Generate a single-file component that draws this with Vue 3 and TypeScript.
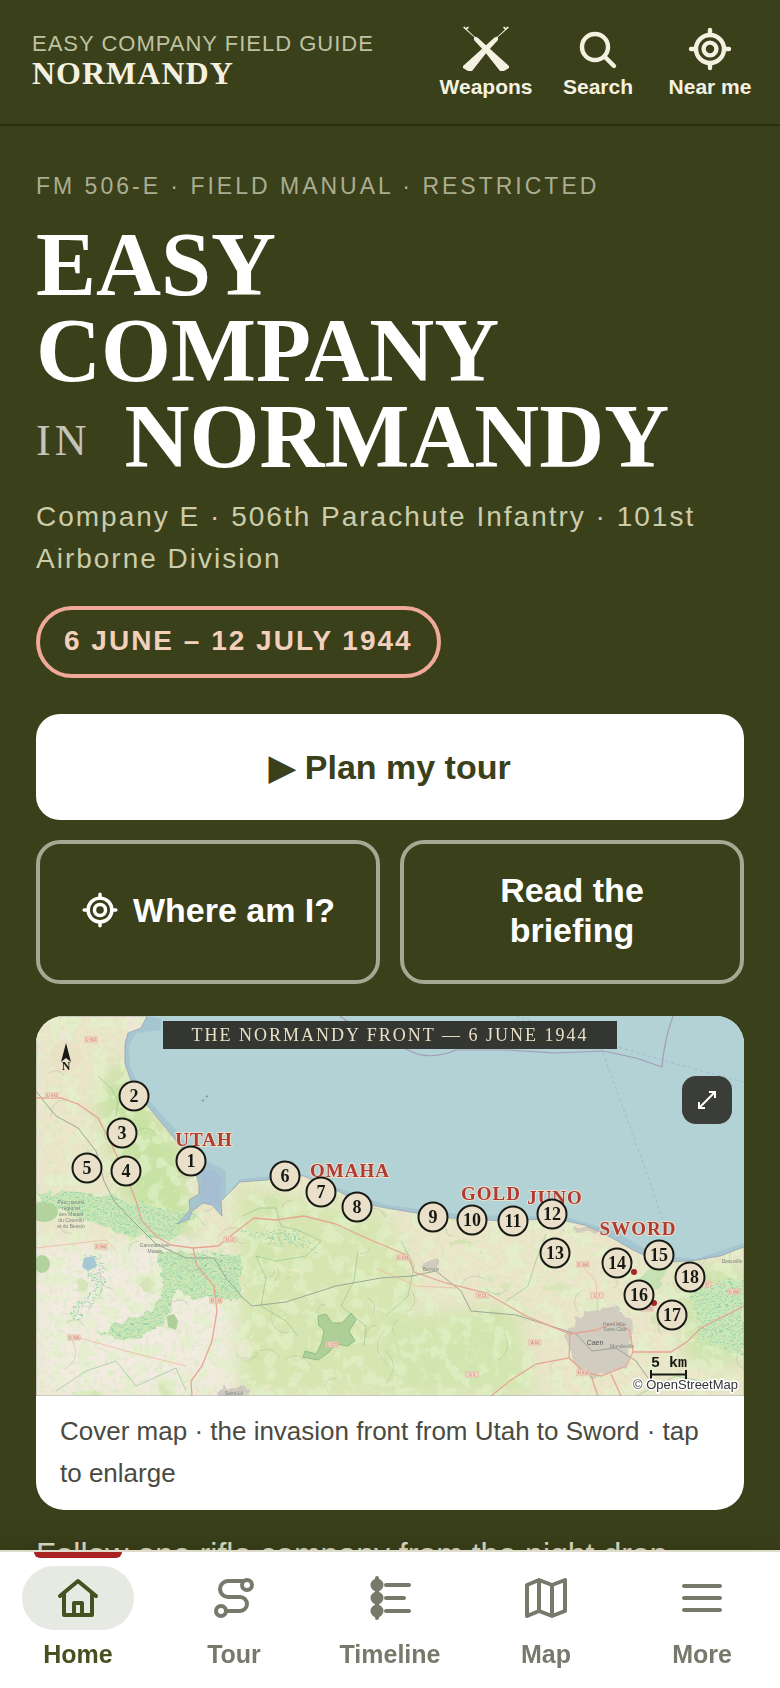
<script setup lang="ts">
import { ref } from 'vue'

interface Marker { n: number; x: number; y: number }
interface Label { text: string; x: number; y: number }
interface Blob { x: number; y: number; rx: number; ry: number; fill: string }

const tabs = ['Home', 'Tour', 'Timeline', 'Map', 'More'] as const
const active = ref<string>('Home')

const markers: Marker[] = [
  { n: 1, x: 155, y: 145 }, { n: 2, x: 98, y: 80 }, { n: 3, x: 86, y: 117 },
  { n: 4, x: 90, y: 155 }, { n: 5, x: 51, y: 152 }, { n: 6, x: 249, y: 160 },
  { n: 7, x: 285, y: 176 }, { n: 8, x: 321, y: 191 }, { n: 9, x: 397, y: 201 },
  { n: 10, x: 436, y: 204 }, { n: 11, x: 477, y: 205 }, { n: 12, x: 516, y: 198 },
  { n: 13, x: 519, y: 237 }, { n: 14, x: 581, y: 247 }, { n: 15, x: 623, y: 239 },
  { n: 16, x: 603, y: 279 }, { n: 17, x: 636, y: 299 }, { n: 18, x: 654, y: 261 },
]

const beaches: Label[] = [
  { text: 'UTAH', x: 168, y: 130 },
  { text: 'OMAHA', x: 314, y: 161 },
  { text: 'GOLD', x: 455, y: 184 },
  { text: 'JUNO', x: 519, y: 188 },
  { text: 'SWORD', x: 602, y: 219 },
]

const roadSigns: Label[] = [
  { text: 'D 902', x: 55, y: 25 }, { text: 'D 974', x: 16, y: 81 },
  { text: 'D 900', x: 65, y: 232 }, { text: 'N 13', x: 194, y: 225 },
  { text: 'N 174', x: 180, y: 286 }, { text: 'D 900', x: 38, y: 323 },
  { text: 'D 572', x: 296, y: 330 }, { text: 'N 13', x: 446, y: 281 },
  { text: 'D 613', x: 367, y: 243 }, { text: 'D 404', x: 547, y: 250 },
  { text: 'D 7', x: 561, y: 281 }, { text: 'A 84', x: 499, y: 328 },
  { text: 'N 814', x: 547, y: 358 }, { text: 'D 6', x: 436, y: 360 },
  { text: 'D 37', x: 669, y: 270 }, { text: 'D 400', x: 698, y: 277 },
  { text: 'D 515', x: 611, y: 294 },
]

const places: Label[] = [
  { text: 'Parc naturel', x: 35, y: 188 }, { text: 'régional', x: 35, y: 194 },
  { text: 'des Marais', x: 35, y: 200 }, { text: 'du Cotentin', x: 35, y: 206 },
  { text: 'et du Bessin', x: 35, y: 212 }, { text: 'Carentan-les-', x: 119, y: 231 },
  { text: 'Marais', x: 119, y: 237 }, { text: 'Bayeux', x: 395, y: 255 },
  { text: 'Hérouville-', x: 579, y: 310 }, { text: 'Saint-Clair', x: 579, y: 315 },
  { text: 'Mondeville', x: 586, y: 332 }, { text: 'Deauville', x: 696, y: 247 },
  { text: 'Saint-Lô', x: 198, y: 379 },
]

function sequence(start: number): () => number {
  let s = start
  return () => {
    s = (s * 16807) % 2147483647
    return s / 2147483647
  }
}

const rand = sequence(1944)

const fields: Blob[] = Array.from({ length: 110 }, () => {
  const x = rand() * 708
  return {
    x,
    y: rand() * 380,
    rx: 3 + rand() * 12,
    ry: 2 + rand() * 8,
    fill: x < 215 ? ['#f0eadb', '#cce3a4', '#f0eadb'][Math.floor(rand() * 3)] : ['#cfe2aa', '#f0e8cb', '#d6e5b3'][Math.floor(rand() * 3)],
  }
})

const lanes: string[] = Array.from({ length: 100 }, () => {
  const x = rand() * 708
  const y = 20 + rand() * 360
  const a = rand() * 36 - 18
  const b = rand() * 36 - 18
  return `M${x.toFixed(0)} ${y.toFixed(0)}q${a.toFixed(0)} ${b.toFixed(0)} ${(a + b).toFixed(0)} ${(b - a).toFixed(0)}`
})

const land =
  'M0 0H111L105 12L92 17L89 28V48L95 65L108 85L120 100L138 122L150 137L160 158L163 168L163 178L153 184L154 194L141 208L153 203L156 195L167 187L176 189L186 200L185 185L204 166L232 164L245 158L268 160L300 174L325 187L350 192L380 197L400 201L430 203L470 205L510 203L530 205L548 209L562 215L578 223L597 234L612 241L630 246L655 245L684 240L708 231V380H0Z'
</script>

<template>
  <div class="shell">
    <header class="top">
      <div class="brand">
        <span class="kicker">EASY COMPANY FIELD GUIDE</span>
        <span class="name">NORMANDY</span>
      </div>
      <nav class="tools" aria-label="Quick tools">
        <button type="button" class="tool">
          <svg width="48" height="48" viewBox="-24 -24 48 48" fill="currentColor" aria-hidden="true">
            <g v-for="side in [1, -1]" :key="side" :transform="`scale(${side} 1)`">
              <path d="M-23 -21.500L-21.500 -22.500L-20 -21L-18 -22.500L-17 -21.500L-19 -19.500L-11.500 -12.500L-8.500 -11.500L3 -1L23 17V19L18 22H14L-1 3L-12 -9V-12Z" />
            </g>
          </svg>
          <span>Weapons</span>
        </button>
        <button type="button" class="tool">
          <svg width="48" height="48" viewBox="0 0 48 48" fill="none" stroke="currentColor" stroke-width="4.400" stroke-linecap="round" aria-hidden="true">
            <circle cx="21" cy="22" r="13" />
            <path d="M30.500 31.500L40 41" />
          </svg>
          <span>Search</span>
        </button>
        <button type="button" class="tool">
          <svg width="48" height="48" viewBox="0 0 48 48" fill="none" stroke="currentColor" stroke-width="4.400" stroke-linecap="round" aria-hidden="true">
            <circle cx="24" cy="24" r="14" />
            <circle cx="24" cy="24" r="6.400" />
            <path d="M24 5V10M24 38V43M5 24H10M38 24H43" />
          </svg>
          <span>Near me</span>
        </button>
      </nav>
    </header>

    <main class="content">
      <p class="manual">FM 506-E · FIELD MANUAL · RESTRICTED</p>
      <h1>EASY<br />COMPANY<br /><small>IN</small>NORMANDY</h1>
      <p class="unit">Company E · 506th Parachute Infantry · 101st Airborne Division</p>
      <p class="dates">6 JUNE – 12 JULY 1944</p>

      <div class="actions">
        <button type="button" class="primary">▶ Plan my tour</button>
        <button type="button" class="ghost">
          <svg width="38" height="38" viewBox="0 0 48 48" fill="none" stroke="currentColor" stroke-width="4.400" stroke-linecap="round" aria-hidden="true">
            <circle cx="24" cy="24" r="15" />
            <circle cx="24" cy="24" r="7" />
            <path d="M24 4V9M24 39V44M4 24H9M39 24H44" />
          </svg>
          <span>Where am I?</span>
        </button>
        <button type="button" class="ghost"><span>Read the briefing</span></button>
      </div>

      <figure class="card">
        <div class="map">
          <svg class="chart" viewBox="0 0 708 380" role="img" aria-label="The Normandy front, 6 June 1944">
            <defs>
              <clipPath id="land"><path :d="land" /></clipPath>
              <filter id="woods" x="0" y="0" width="100%" height="100%">
                <feTurbulence type="fractalNoise" baseFrequency="0.07" numOctaves="5" seed="6" />
                <feColorMatrix values="0 0 0 0 0.76  0 0 0 0 0.88  0 0 0 0 0.59  9 0 0 0 -4.5" />
              </filter>
              <filter id="hedges" x="0" y="0" width="100%" height="100%">
                <feTurbulence type="fractalNoise" baseFrequency="0.22" numOctaves="3" seed="44" />
                <feColorMatrix values="0 0 0 0 0.64  0 0 0 0 0.78  0 0 0 0 0.5  0 6 0 0 -3.3" />
              </filter>
              <filter id="soft" x="-20%" y="-20%" width="140%" height="140%"><feGaussianBlur stdDeviation="9" /></filter>
              <filter id="ragged" x="-10%" y="-10%" width="120%" height="120%">
                <feTurbulence type="fractalNoise" baseFrequency="0.08" numOctaves="3" seed="3" />
                <feDisplacementMap in="SourceGraphic" scale="14" xChannelSelector="R" yChannelSelector="G" />
              </filter>
              <pattern id="reeds" width="7" height="5" patternUnits="userSpaceOnUse">
                <path d="M0 1H4M3 3.500H7" stroke="#93cfac" stroke-width="0.8" />
              </pattern>
            </defs>

            <rect width="708" height="380" fill="#b2d2d5" />
            <path d="M111 0L125 3V14L100 17L93 30L94 50L102 68L116 88L138 112L160 140L190 155V180L204 163L240 160L300 171L350 189L430 199L530 201L580 216L620 239L660 243L708 227V245H300L100 220V100L80 30Z" fill="#a5c5d1" />
            <path d="M166 156q14 -6 20 8q-4 12 -2 26q-12 -2 -20 -5Z" fill="#a5bed1" />

            <g clip-path="url(#land)">
              <rect width="708" height="380" fill="#ebe5ca" />
              <g filter="url(#soft)">
                <path d="M80 40L150 140L160 240L90 190L60 90Z" fill="#c7e2a2" />
                <path d="M0 225H170L200 290V380H0Z" fill="#f1ebe0" />
                <path d="M200 170L350 195L380 270L350 380H200Z" fill="#d7e6b0" />
                <path d="M350 300L480 290L500 380H340Z" fill="#d3e6af" />
                <path d="M640 250H708V350H650Z" fill="#cde4ac" />
              </g>
              <g filter="url(#ragged)">
                <ellipse v-for="(f, i) in fields" :key="i" :cx="f.x" :cy="f.y" :rx="f.rx" :ry="f.ry" :fill="f.fill" opacity="0.7" />
              </g>
              <rect width="708" height="380" filter="url(#woods)" opacity="0.65" />
              <rect width="708" height="380" filter="url(#hedges)" opacity="0.4" />

              <g filter="url(#ragged)">
                <path d="M0 175L70 178L110 190L160 198L135 225L110 220L75 212L0 188Z" fill="#cae6b5" />
                <path d="M0 175L70 178L110 190L160 198L135 225L110 220L75 212L0 188Z" fill="url(#reeds)" />
                <path d="M120 235L205 238L205 285L160 280L140 275L125 310L90 325L60 315L110 300L128 270Z" fill="#cae6b5" />
                <path d="M120 235L205 238L205 285L160 280L140 275L125 310L90 325L60 315L110 300L128 270Z" fill="url(#reeds)" />
                <path d="M48 240H70L68 280L40 305L30 300L55 275Z" fill="url(#reeds)" />
                <path d="M200 218L260 214L285 235L240 228Z" fill="url(#reeds)" />
                <path d="M655 275L708 262V340L665 325Z" fill="#cbe7b7" />
                <path d="M655 275L708 262V340L665 325Z" fill="url(#reeds)" />
                <path d="M600 265L625 247L635 250L608 290Z" fill="#c7e2b2" />
                <path d="M540 300L575 290L597 305L592 350L560 362L535 345L532 325Z" fill="#d0ccbf" />
                <path d="M385 244L402 242L404 255L386 256Z" fill="#d0ccbd" />
                <ellipse cx="555" cy="213" rx="18" ry="4" fill="#d3ccbd" />
                <ellipse cx="198" cy="376" rx="16" ry="5" fill="#cfc9bd" />
              </g>
              <path d="M282 300L290 298L296 307H306L315 297L320 304L313 315L319 325L312 330L300 328L292 337L282 344L267 341L269 335L280 338L286 326L288 314L283 310Z" fill="#aecf97" stroke="#8fbd83" />
              <path d="M131 300L138 298L142 305L140 314L132 311Z" fill="#aecf97" />
              <ellipse cx="8" cy="196" rx="14" ry="10" fill="#b3d39c" />
              <ellipse cx="6" cy="248" rx="8" ry="9" fill="#b3d39c" />
              <path d="M48 242L58 240L61 250L52 255L46 251Z" fill="#a5c8d4" />
              <path v-for="(d, i) in lanes" :key="i" :d="d" fill="none" stroke="#a9b4a2" stroke-width="0.6" opacity="0.7" />

              <g fill="none" stroke="#8fc391" stroke-width="0.8" opacity="0.8">
                <path d="M62 60L75 72L82 85L80 100" />
                <path d="M206 200L224 192H240L245 210L262 214L285 225L270 240L240 245L220 240L230 262L225 290L250 305L262 320" />
                <path d="M322 235L318 265L305 290L330 310L328 330" />
                <path d="M365 225L378 250L372 280L350 300" />
                <path d="M510 218L500 245L492 270L470 285" />
                <path d="M20 375L50 355L80 345L100 370L140 352L150 375" />
                <path d="M600 380L640 360L690 370" />
              </g>
              <path d="M0 75L10 88L20 100L42 112L60 135L68 165L78 185L98 206L120 228L150 242L178 242L190 262L205 280L216 290L250 286L300 270L345 262L376 260L400 255L425 275L435 295L480 299L540 318L556 335L580 332L600 345L612 362" fill="none" stroke="#949f91" stroke-width="0.9" />
              <g fill="none" stroke="#e8a493" stroke-width="1.300">
                <path d="M0 82L25 82L42 88L62 102L75 127L90 160L100 185L106 205L120 220L135 229L157 232L182 230L197 218L218 202L240 204L268 200L300 208L330 222L354 232L372 240L378 256L410 267L450 277L490 300L534 318L560 314L580 306L594 315L597 336H635L652 325L665 312L708 290" />
                <path d="M157 232L161 250L178 270L181 295L176 325L166 350L155 365L156 380" />
                <path d="M534 318L533 342L500 348L475 364L455 380M533 342L548 356L565 360L590 350L597 336M555 360L562 380M575 358L585 380" />
              </g>
              <g fill="none" stroke="#f0b9a0" stroke-width="0.8">
                <path d="M0 232L70 224L80 235M44 322L90 335L150 350M340 252L380 270L420 272M548 252L560 265L562 300M660 262L690 270" />
              </g>
            </g>
            <path :d="land" fill="none" stroke="#9398ae" stroke-width="1" opacity="0.7" />

            <g fill="none" stroke="#a49db5" stroke-width="1.200">
              <path d="M304 0L320 12L345 18L370 33Q392 46 420 34L470 34L520 37L567 35L600 42L626 51Q628 25 637 0" />
              <path d="M480 0L568 27L640 48L708 66M567 37L590 100L610 155L627 205" stroke="#94b5d0" stroke-dasharray="3 3" stroke-width="0.8" />
            </g>
            <path d="M166 85l2 -1M170 81l2 -1" stroke="#7f9aa3" stroke-width="1.500" />

            <g class="sign">
              <g v-for="(s, i) in roadSigns" :key="i">
                <rect :x="s.x - 6" :y="s.y - 4" width="12" height="5" />
                <text :x="s.x" :y="s.y">{{ s.text }}</text>
              </g>
            </g>
            <g class="place">
              <text v-for="(p, i) in places" :key="i" :x="p.x" :y="p.y">{{ p.text }}</text>
              <text class="city" x="559" y="329">Caen</text>
            </g>

            <circle cx="30" cy="40" r="16" fill="#eadfc4" opacity="0.8" />
            <path d="M30 27L35 46L30 42L25 46Z" fill="#171a14" />
            <text class="north" x="30" y="54">N</text>

            <rect x="127" y="5" width="454" height="28" fill="#343632" />
            <text class="title" x="354" y="25">THE NORMANDY FRONT — 6 JUNE 1944</text>

            <g class="beach">
              <text v-for="b in beaches" :key="b.text" :x="b.x" :y="b.y">{{ b.text }}</text>
            </g>
            <circle cx="598" cy="256" r="3" fill="#ab2424" />
            <circle cx="618" cy="287" r="3" fill="#ab2424" />
            <g v-for="m in markers" :key="m.n" class="marker">
              <circle :cx="m.x" :cy="m.y" r="14.500" />
              <text :x="m.x" :y="m.y + 6">{{ m.n }}</text>
            </g>

            <text class="scale" x="633" y="351">5 km</text>
            <path d="M615 354V363M650 354V363M615 358.500H650" stroke="#171a14" stroke-width="2" />
            <text class="credit" x="702" y="373">© OpenStreetMap</text>
          </svg>
          <button type="button" class="expand" aria-label="Enlarge map">
            <svg width="22" height="22" viewBox="0 0 22 22" fill="none" stroke="currentColor" stroke-width="2" aria-hidden="true">
              <path d="M3 19L19 3M13 3H19V9M3 13V19H9" />
            </svg>
          </button>
        </div>
        <figcaption>Cover map · the invasion front from Utah to Sword · tap to enlarge</figcaption>
      </figure>

      <p class="lead">Follow one rifle company from the night drop</p>
    </main>

    <nav class="tabs" aria-label="Main">
      <button v-for="t in tabs" :key="t" type="button" class="tab" :class="{ on: active === t }" @click="active = t">
        <span class="pill">
          <svg width="48" height="48" viewBox="0 0 48 48" fill="none" stroke="currentColor" stroke-width="4" stroke-linecap="round" stroke-linejoin="round" aria-hidden="true">
            <path v-if="t === 'Home'" d="M6 22L24 7L42 22M10 20V41H38V20M20 41V29H28V41" />
            <g v-else-if="t === 'Tour'">
              <circle cx="37" cy="11" r="5" />
              <circle cx="11" cy="37" r="5" />
              <path d="M32 7H18a8 8 0 0 0 0 16H30a7 7 0 0 1 0 14H16" />
            </g>
            <g v-else-if="t === 'Timeline'">
              <path d="M11 4V44M20 11H43M20 24H38M20 37H43" />
              <g fill="currentColor">
                <circle cx="11" cy="11" r="4.500" />
                <circle cx="11" cy="24" r="4.500" />
                <circle cx="11" cy="37" r="4.500" />
              </g>
            </g>
            <path v-else-if="t === 'Map'" d="M5 11L17 6L30 11L43 6V37L30 42L17 37L5 42ZM17 6V37M30 11V42" />
            <path v-else d="M6 12H42M6 24H42M6 36H42" />
          </svg>
        </span>
        <span class="tag">{{ t }}</span>
      </button>
    </nav>
  </div>
</template>

<style>
body {
  margin: 0;
  background: #3a401a;
}
</style>

<style scoped>
.shell {
  display: flex;
  flex-direction: column;
  height: 100vh;
  overflow: hidden;
  background: #3a401a;
  color: #fff;
  font-family: 'Liberation Sans', Arial, sans-serif;
}

button {
  margin: 0;
  padding: 0;
  border: 0;
  background: none;
  color: inherit;
  font: inherit;
  cursor: pointer;
}

p,
h1,
figure {
  margin: 0;
}

.top {
  display: flex;
  align-items: center;
  justify-content: space-between;
  box-sizing: border-box;
  height: 126px;
  flex: none;
  padding: 0 18px 4px 32px;
  border-bottom: 2px solid #2a2f11;
}

.brand {
  display: flex;
  flex-direction: column;
}

.kicker {
  color: #bfc2a2;
  font-size: 22px;
  line-height: 26px;
  letter-spacing: 1px;
}

.name {
  color: #f5f1e1;
  font: bold 32px/32px 'Liberation Serif', serif;
  letter-spacing: 1px;
}

.tools {
  display: flex;
  gap: 8px;
}

.tool {
  display: flex;
  flex-direction: column;
  align-items: center;
  gap: 2px;
  width: 104px;
  padding-top: 4px;
  color: #f5f1e1;
  font-size: 21px;
  font-weight: bold;
  line-height: 24px;
}

.content {
  flex: 1;
  min-height: 0;
  overflow-y: auto;
  scrollbar-width: none;
  padding: 44px 36px 0;
}

.manual {
  color: #abad91;
  font-size: 23px;
  line-height: 32px;
  letter-spacing: 3px;
}

h1 {
  margin-top: 20px;
  font: bold 90px/86px 'Liberation Serif', serif;
}

h1 small {
  margin-right: 34px;
  color: #c4c5ba;
  font-size: 44px;
  font-weight: normal;
  line-height: 44px;
  letter-spacing: 4px;
  vertical-align: 12px;
}

.unit {
  margin-top: 16px;
  color: #cbccab;
  font-size: 28px;
  line-height: 42px;
  letter-spacing: 2px;
}

.dates {
  box-sizing: border-box;
  width: fit-content;
  margin-top: 26px;
  padding: 15px 24px 17px;
  border: 4px solid #f0a899;
  border-radius: 36px;
  color: #f2d0bc;
  font-size: 28px;
  font-weight: bold;
  line-height: 32px;
  letter-spacing: 2px;
}

.actions {
  display: grid;
  grid-template-columns: 1fr 1fr;
  gap: 20px;
  margin-top: 36px;
  font-size: 34px;
  font-weight: bold;
  line-height: 40px;
}

.primary {
  grid-column: 1 / -1;
  height: 106px;
  border-radius: 24px;
  background: #fff;
  color: #3a401a;
}

.ghost {
  display: flex;
  align-items: center;
  justify-content: center;
  gap: 14px;
  height: 144px;
  padding: 0 40px 4px;
  border: 4px solid #a5a893;
  border-radius: 24px;
  white-space: nowrap;
}

.ghost svg {
  flex: none;
}

.ghost:last-child {
  padding: 0 80px 4px;
  white-space: normal;
}

.card {
  margin-top: 32px;
  overflow: hidden;
  border-radius: 28px;
  background: #fff;
  color: #4a4a42;
}

.map {
  position: relative;
}

.chart {
  display: block;
  width: 100%;
}

.expand {
  position: absolute;
  top: 60px;
  right: 12px;
  display: grid;
  place-items: center;
  width: 50px;
  height: 48px;
  border-radius: 14px;
  background: #3b3d39;
  color: #fff;
}

.title {
  fill: #e9dfc4;
  font: 18px 'Liberation Serif', serif;
  letter-spacing: 2px;
  text-anchor: middle;
}

.beach text {
  fill: #b03a35;
  stroke: #eadfc8;
  stroke-width: 2px;
  paint-order: stroke;
  font: bold 19px 'Liberation Serif', serif;
  letter-spacing: 1px;
  text-anchor: middle;
}

.marker circle {
  fill: #eadfc8;
  stroke: #171a14;
  stroke-width: 2px;
}

.marker text {
  fill: #171a14;
  font: bold 18px 'Liberation Serif', serif;
  text-anchor: middle;
}

.sign rect {
  fill: #f3dccb;
  stroke: #e5b9a4;
  stroke-width: 1px;
}

.sign text {
  fill: #c26e60;
  font: 4px 'Liberation Sans', sans-serif;
  text-anchor: middle;
}

.place text {
  fill: #7d8580;
  font: 5px 'Liberation Sans', sans-serif;
  text-anchor: middle;
}

.place .city {
  fill: #555;
  font-size: 7px;
}

.north {
  fill: #171a14;
  font: bold 12px 'Liberation Serif', serif;
  text-anchor: middle;
}

.scale {
  fill: #171a14;
  font: bold 15px 'Liberation Mono', monospace;
  text-anchor: middle;
}

.credit {
  fill: #333;
  stroke: #fff;
  stroke-width: 3px;
  stroke-linejoin: round;
  paint-order: stroke;
  font: 13px 'Liberation Sans', sans-serif;
  text-anchor: end;
}

figcaption {
  padding: 14px 24px 16px;
  font-size: 26px;
  line-height: 42px;
}

.lead {
  margin-top: 20px;
  padding-bottom: 40px;
  color: #e9e6d0;
  font-size: 32px;
  line-height: 48px;
}

.tabs {
  position: relative;
  z-index: 1;
  display: grid;
  grid-template-columns: repeat(5, 1fr);
  box-sizing: border-box;
  height: 138px;
  flex: none;
  border-top: 2px solid #dedccb;
  background: #fff;
  box-shadow: 0 -4px 24px rgba(30, 32, 12, 0.25);
}

.tab {
  position: relative;
  display: flex;
  flex-direction: column;
  align-items: center;
  gap: 8px;
  padding-top: 14px;
  color: #78796b;
  font-size: 25px;
  font-weight: bold;
  line-height: 32px;
}

.tab.on {
  color: #465020;
}

.tab.on::before {
  content: '';
  position: absolute;
  top: 0;
  width: 88px;
  height: 6px;
  border-radius: 0 0 6px 6px;
  background: #a8231f;
}

.pill {
  display: grid;
  place-items: center;
  width: 112px;
  height: 64px;
  border-radius: 32px;
}

.on .pill {
  background: #e7e9e3;
}
</style>
